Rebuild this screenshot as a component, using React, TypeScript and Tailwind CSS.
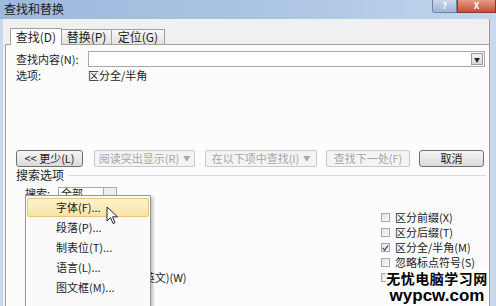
import React from "react";

const font = { fontFamily: '"Noto Sans CJK SC", "Noto Sans", sans-serif' };

function Btn({ label, w, disabled, arrow, ml }: { label: string; w: number; disabled?: boolean; arrow?: boolean; ml: number }) {
  return (
    <div
      className={
        disabled
          ? "h-[17px] flex items-center justify-center gap-1 rounded-[2px] border border-[#c9c9c9] bg-[#f4f4f4] text-[11px] text-[#a6a6a6]"
          : "h-[17px] flex items-center justify-center rounded-[3px] border border-[#707070] bg-gradient-to-b from-[#f6f6f6] to-[#dadada] text-[11px] text-[#1a1a1a]"
      }
      style={{ width: w, marginLeft: ml }}
    >
      <span>{label}</span>
      {arrow && <span className="text-[7px]">▼</span>}
    </div>
  );
}

function Check({ checked, label }: { checked?: boolean; label: string }) {
  return (
    <div className="h-[15px] flex items-center gap-[5px]">
      <div className="w-[9px] h-[9px] border border-[#a7a7a7] bg-gradient-to-br from-[#e2e2e2] to-[#fbfbfb] flex items-center justify-center">
        {checked && (
          <svg width="8" height="8" viewBox="0 0 8 8">
            <path d="M1 4 L3 6.5 L7 1" stroke="#3a4e8c" strokeWidth="1.4" fill="none" />
          </svg>
        )}
      </div>
      <span className="text-[11px] text-[#222] leading-none whitespace-nowrap">{label}</span>
    </div>
  );
}

export default function App() {
  const menu = ["字体(F)...", "段落(P)...", "制表位(T)...", "语言(L)...", "图文框(M)..."];

  return (
    <div className="w-[496px] h-[306px] overflow-hidden relative bg-[#c9d9ec]" style={font}>
      {/* Title bar */}
      <div className="h-[19px] flex items-start bg-gradient-to-r from-[#9db9dc] via-[#a9c3e3] to-[#c3d6ec]">
        <span className="ml-[4px] mt-[2px] text-[12px] leading-[14px] text-[#1b1b1b]">查找和替换</span>
        <div className="ml-auto flex">
          <div className="w-[25px] h-[13px] rounded-bl-[3px] border border-t-0 border-[#6d84a7] bg-gradient-to-b from-[#c8d8ec] to-[#9fb6d6] flex items-center justify-center text-[9px] text-white font-bold leading-[12px]">?</div>
          <div className="w-[39px] h-[13px] border border-t-0 border-[#8a3a2c] bg-gradient-to-b from-[#e59c86] to-[#c84a30] flex items-center justify-center text-[9px] text-white font-bold leading-[12px]">X</div>
        </div>
      </div>

      {/* Body */}
      <div className="ml-[3px] mr-[6px] h-[287px] bg-[#f0f0f0] border-r border-[#9a9a9a] flex flex-col">
        {/* Tabs */}
        <div className="flex items-end mt-[8px] ml-[7px] h-[17px]">
          <div className="w-[52px] h-[17px] bg-white border border-b-0 border-[#a0a0a0] text-[12px] flex items-center justify-center text-[#1b1b1b] relative z-10 -mb-px">查找(D)</div>
          <div className="w-[50px] h-[15px] bg-gradient-to-b from-[#f7f7f7] to-[#e3e3e3] border border-l-0 border-b-0 border-[#a0a0a0] text-[12px] flex items-center justify-center text-[#1b1b1b]">替换(P)</div>
          <div className="w-[53px] h-[15px] bg-gradient-to-b from-[#f7f7f7] to-[#e3e3e3] border border-l-0 border-b-0 border-[#a0a0a0] text-[12px] flex items-center justify-center text-[#1b1b1b]">定位(G)</div>
        </div>

        {/* Panel */}
        <div className="ml-[2px] mr-0 flex-1 bg-[#fcfcfc] border-t border-l border-[#a0a0a0] flex flex-col text-[#1b1b1b]">
          <div className="flex items-center mt-[6px] h-[16px]">
            <span className="ml-[10px] w-[72px] text-[11px]">查找内容(N):</span>
            <div className="w-[397px] h-[16px] border border-[#a9a9a9] bg-white flex items-center justify-end pr-[1px]">
              <div className="w-[12px] h-[12px] border border-[#9a9a9a] bg-gradient-to-b from-[#f4f4f4] to-[#d8d8d8] flex items-center justify-center text-[6px] text-[#222]">▼</div>
            </div>
          </div>
          <div className="flex items-center mt-[1px] h-[14px] text-[11px]">
            <span className="ml-[10px] w-[72px]">选项:</span>
            <span>区分全/半角</span>
          </div>

          <div className="flex items-center mt-[68px]">
            <Btn label="<< 更少(L)" w={67} ml={10} />
            <Btn label="阅读突出显示(R)" w={101} disabled arrow ml={11} />
            <Btn label="在以下项中查找(I)" w={112} disabled arrow ml={10} />
            <Btn label="查找下一处(F)" w={84} disabled ml={9} />
            <Btn label="取消" w={65} ml={9} />
          </div>

          <div className="flex items-center mt-[1px] h-[14px]">
            <span className="ml-[10px] text-[12px]">搜索选项</span>
            <div className="ml-[4px] w-[418px] h-px bg-[#dcdcdc]" />
          </div>

          <div className="flex items-center mt-[4px] h-[14px] text-[11px]">
            <span className="ml-[19px] w-[33px]">搜索:</span>
            <div className="w-[59px] h-[13px] border border-[#a9a9a9] bg-white flex items-center">
              <span className="ml-[2px] flex-1">全部</span>
              <div className="w-[13px] h-[11px] border-l border-[#a9a9a9] bg-[#eeeeee]" />
            </div>
          </div>

          <div className="flex mt-[10px]">
            <div className="ml-[21px] w-[354px] flex flex-col">
              <Check label="区分大小写(H)" />
              <Check label="全字匹配(Y)" />
              <Check label="使用通配符(U)" />
              <Check label="同音(英文)(K)" />
              <Check label="查找单词的所有形式(英文)(W)" />
            </div>
            <div className="flex flex-col">
              <Check label="区分前缀(X)" />
              <Check label="区分后缀(T)" />
              <Check checked label="区分全/半角(M)" />
              <Check label="忽略标点符号(S)" />
              <Check label="忽略空格(W)" />
            </div>
          </div>
        </div>
      </div>

      {/* Format dropdown menu */}
      <div className="absolute left-[25px] top-[195px] w-[126px] h-[120px] bg-[#fafafa] border border-[#979797] shadow-[2px_2px_3px_rgba(0,0,0,0.25)] pt-[2px] px-[1px]">
        {menu.map((m, i) => (
          <div
            key={m}
            className={
              i === 0
                ? "h-[19px] mb-px flex items-center pl-[28px] text-[11px] text-[#1b1b1b] bg-gradient-to-b from-[#fdf2cf] to-[#f9e3a7] border border-[#e8c770] rounded-[2px]"
                : "h-[19px] mb-px flex items-center pl-[29px] text-[11px] text-[#1b1b1b]"
            }
          >
            {m}
          </div>
        ))}
      </div>

      {/* Mouse cursor */}
      <svg className="absolute left-[106px] top-[206px]" width="14" height="20" viewBox="0 0 14 20">
        <path d="M1 1 L1 15 L4.5 11.5 L7 17.5 L9 16.6 L6.6 10.8 L11.5 10.8 Z" fill="white" stroke="#222" strokeWidth="1" strokeLinejoin="round" />
      </svg>

      {/* Watermark */}
      <div className="absolute left-[386px] top-[269px] w-[102px] flex flex-col items-center bg-white leading-none whitespace-nowrap">
        <span className="text-[14px] font-bold text-black tracking-[0.5px] leading-[18px]">无忧电脑学习网</span>
        <span className="text-[17px] font-bold text-black leading-[18px]" style={{ fontFamily: '"Liberation Sans", Arial, sans-serif' }}>wypcw.com</span>
      </div>
    </div>
  );
}
